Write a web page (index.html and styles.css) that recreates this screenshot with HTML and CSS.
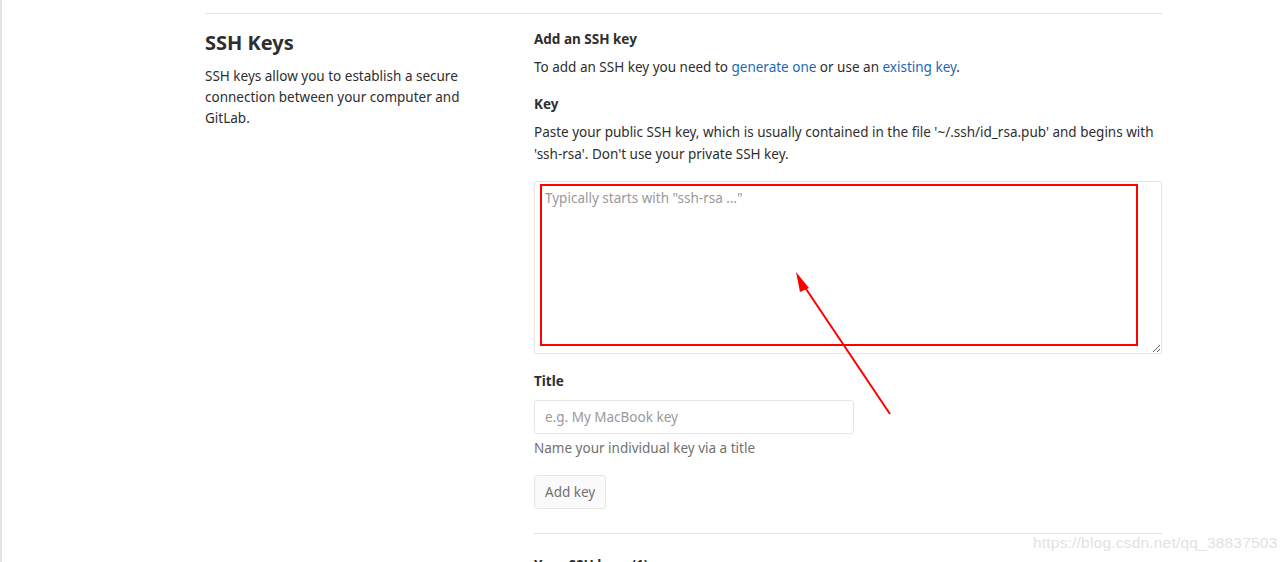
FILE: index.html
```html
<!DOCTYPE html>
<html>
<head>
<meta charset="utf-8">
<link rel="stylesheet" href="styles.css">
</head>
<body>
<div class="page">
  <div class="content">
    <hr class="rule">
    <div class="row">
      <div class="left">
        <h4 class="heading">SSH Keys</h4>
        <p class="desc">SSH keys allow you to establish a secure connection between your computer and GitLab.</p>
      </div>
      <div class="right">
        <h5 class="subhead">Add an SSH key</h5>
        <p class="text">To add an SSH key you need to <a href="#">generate one</a> or use an <a href="#">existing key</a>.</p>
        <label class="label">Key</label>
        <p class="text">Paste your public SSH key, which is usually contained in the file '~/.ssh/id_rsa.pub' and begins with 'ssh-rsa'. Don't use your private SSH key.</p>
        <div class="ta-wrap">
          <textarea class="ta" placeholder="Typically starts with &quot;ssh-rsa …&quot;"></textarea>
          <div class="mark"></div>
          <svg class="arrow" width="120" height="160" viewBox="0 0 120 160">
            <line x1="112" y1="152" x2="22" y2="18" stroke="#ff0000" stroke-width="2"/>
            <polygon points="18,10 31,26 22,30" fill="#ff0000"/>
          </svg>
        </div>
        <label class="label title-label">Title</label>
        <input class="input" type="text" placeholder="e.g. My MacBook key">
        <p class="help">Name your individual key via a title</p>
        <button class="btn">Add key</button>
        <hr class="rule2">
        <h5 class="keys">Your SSH keys (1)</h5>
      </div>
    </div>
  </div>
</div>
<div class="watermark">https://blog.csdn.net/qq_38837503</div>
</body>
</html>
```

FILE: styles.css
```css
html, body {
  margin: 0;
  padding: 0;
  height: 100%;
  overflow: hidden;
  background: #fff;
}
body {
  font-family: "Noto Sans", "Open Sans", sans-serif;
  font-size: 13.5px;
  color: #2e2e2e;
  border-left: 2px solid #e3e3e3;
  box-sizing: border-box;
}
.page {
  padding-left: 203px;
  width: 957px;
}
.content {
  padding-top: 13px;
}
.rule {
  border: 0;
  border-top: 1px solid #e5e5e5;
  margin: 0;
}
.row {
  display: flex;
}
.left {
  width: 329px;
  flex: none;
  padding-top: 16px;
}
.heading {
  font-size: 20px;
  font-weight: 700;
  margin: 0 0 10px;
  line-height: 26px;
}
.desc {
  margin: 0;
  width: 268px;
  line-height: 21px;
}
.right {
  flex: 1;
  padding-top: 15px;
  position: relative;
}
.subhead {
  font-size: 13.5px;
  font-weight: 700;
  margin: 0 0 7px;
  line-height: 20px;
}
.text {
  margin: 0 0 16px;
  line-height: 22px;
}
a {
  color: #1b69b6;
  text-decoration: none;
}
.label {
  display: block;
  font-weight: 700;
  line-height: 20px;
  margin-top: 0;
  margin-bottom: 7px;
}
.ta-wrap {
  position: relative;
  height: 173px;
  margin-top: 16px;
}
.ta {
  box-sizing: border-box;
  width: 100%;
  height: 173px;
  border: 1px solid #e5e5e5;
  border-radius: 2px;
  padding: 6px 10px;
  font-family: inherit;
  font-size: 13.5px;
  line-height: 20px;
  color: #2e2e2e;
  resize: vertical;
  display: block;
  margin: 0;
}
.ta::placeholder, .input::placeholder {
  color: #999;
}
.mark {
  position: absolute;
  left: 6px;
  top: 3px;
  width: 594px;
  height: 158px;
  border: 2px solid #ff0000;
  pointer-events: none;
}
.arrow {
  position: absolute;
  top: 81px;
  left: 244px;
  overflow: visible;
}
.title-label {
  margin-top: 17px;
  margin-bottom: 9px;
}
.input {
  box-sizing: border-box;
  width: 320px;
  height: 34px;
  border: 1px solid #e5e5e5;
  border-radius: 3px;
  padding: 6px 10px;
  font-family: inherit;
  font-size: 13.5px;
  display: block;
  margin: 0;
}
.help {
  margin: 4px 0 0;
  color: #707070;
  line-height: 20px;
}
.btn {
  margin-top: 17px;
  height: 34px;
  padding: 0 10px;
  border: 1px solid #e5e5e5;
  border-radius: 3px;
  background: #fafafa;
  color: #707070;
  font-family: inherit;
  font-size: 13.5px;
  display: block;
}
.rule2 {
  border: 0;
  border-top: 1px solid #e5e5e5;
  margin: 24px 0 0;
}
.keys {
  font-size: 13.5px;
  font-weight: 700;
  margin: 22px 0 0;
}
.watermark {
  position: absolute;
  left: 1033px;
  top: 534px;
  font-family: "Liberation Sans", sans-serif;
  font-size: 15.5px;
  color: #e2e2e2;
  letter-spacing: 0.2px;
}
```
